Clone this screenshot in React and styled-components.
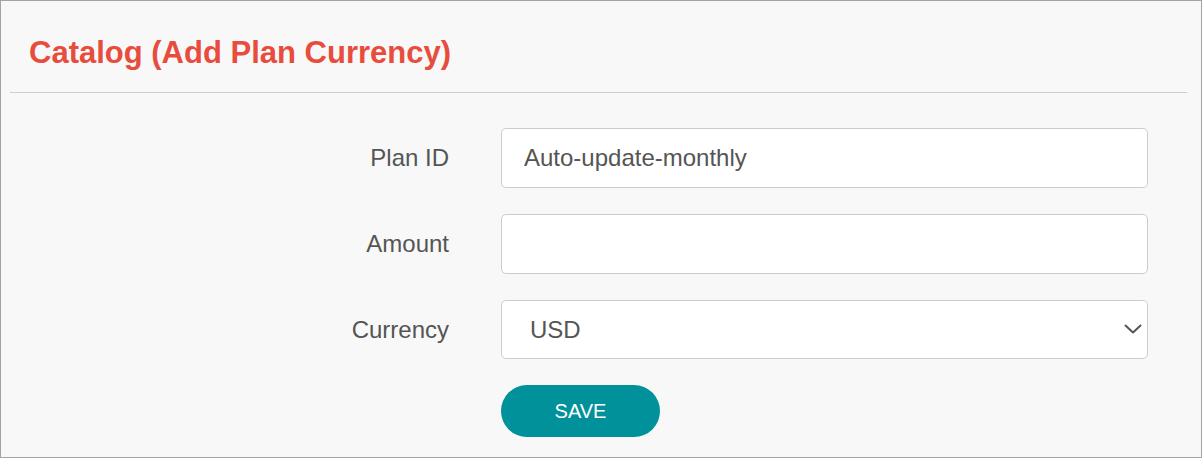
import React from 'react'
import styled, { createGlobalStyle } from 'styled-components'

const GlobalStyle = createGlobalStyle`
    * {
        box-sizing: border-box;
    }
    body {
        margin: 0;
        background: #ffffff;
        font-family: "Liberation Sans", Arial, sans-serif;
    }
`;

const App = () => {
    return (
        <>
            <GlobalStyle/>
            <Panel>
                <Header>
                    <Title>Catalog (Add Plan Currency)</Title>
                </Header>
                <Form onSubmit={(e) => e.preventDefault()}>
                    <Label htmlFor='plan-id'>Plan ID</Label>
                    <Input id='plan-id' type='text' defaultValue='Auto-update-monthly'/>

                    <Label htmlFor='amount'>Amount</Label>
                    <Input id='amount' type='text'/>

                    <Label htmlFor='currency'>Currency</Label>
                    <SelectWrap>
                        <Select id='currency' defaultValue='USD'>
                            <option value='USD'>USD</option>
                            <option value='EUR'>EUR</option>
                            <option value='GBP'>GBP</option>
                        </Select>
                        <Chevron width='18' height='10' viewBox='0 0 18 10'>
                            <path d='M1.5 1.5 L9 8.5 L16.5 1.5' fill='none' stroke='#555' strokeWidth='2' strokeLinecap='round' strokeLinejoin='round'/>
                        </Chevron>
                    </SelectWrap>

                    <Spacer/>
                    <SaveButton type='submit'>SAVE</SaveButton>
                </Form>
            </Panel>
        </>
    )
}

export default App

const Panel = styled.section`
    width: 1202px;
    height: 458px;
    border: 1px solid #a3a3a3;
    background: #f8f8f8;
    overflow: hidden;
`;

const Header = styled.header`
    margin: 0 14px 0 9px;
    padding: 35px 0 22px 19px;
    border-bottom: 1px solid #cfcfcf;
`;

const Title = styled.h1`
    margin: 0;
    font-size: 31px;
    line-height: 34px;
    font-weight: bold;
    color: #e74c3c;
`;

const Form = styled.form`
    display: grid;
    grid-template-columns: 448px 647px;
    column-gap: 52px;
    row-gap: 26px;
    align-items: center;
    padding-top: 35px;
`;

const Label = styled.label`
    justify-self: end;
    font-size: 24px;
    color: #555555;
`;

const Input = styled.input`
    width: 100%;
    height: 60px;
    padding: 0 22px;
    border: 1px solid #cccccc;
    border-radius: 5px;
    background: #ffffff;
    font-family: inherit;
    font-size: 24px;
    color: #555555;
    outline: none;
`;

const SelectWrap = styled.div`
    position: relative;
`;

const Select = styled.select`
    appearance: none;
    width: 100%;
    height: 59px;
    padding: 0 28px;
    border: 1px solid #cccccc;
    border-radius: 5px;
    background: #ffffff;
    font-family: inherit;
    font-size: 24px;
    color: #555555;
    outline: none;
`;

const Chevron = styled.svg`
    position: absolute;
    right: 6px;
    top: 24px;
    pointer-events: none;
`;

const Spacer = styled.div``;

const SaveButton = styled.button`
    width: 159px;
    height: 52px;
    border: none;
    border-radius: 26px;
    background: #01919a;
    color: #ffffff;
    font-family: inherit;
    font-size: 20px;
    cursor: pointer;
`;
